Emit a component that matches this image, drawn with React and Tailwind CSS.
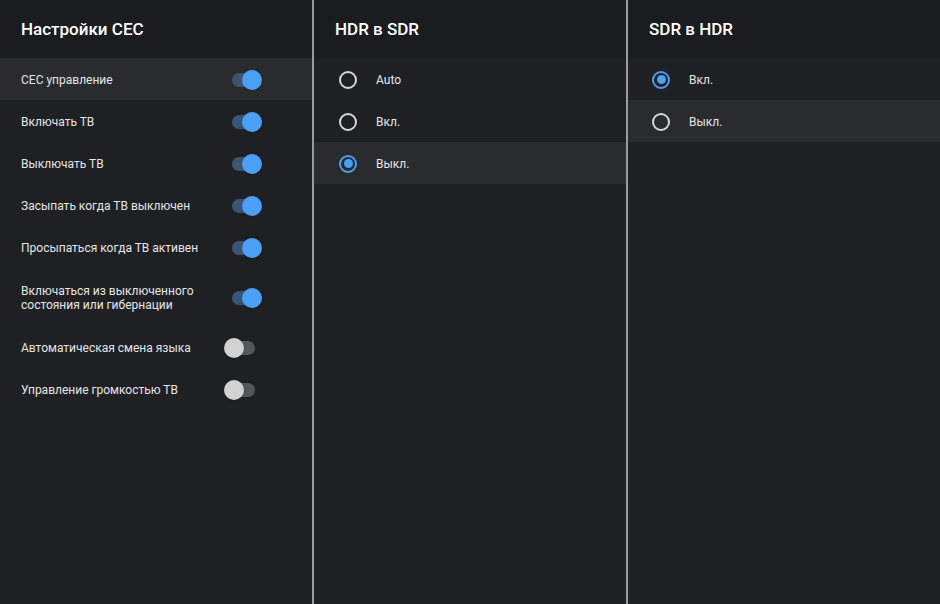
import React from "react";

const cecRows = [
  { label: "CEC управление", on: true, active: true },
  { label: "Включать ТВ", on: true },
  { label: "Выключать ТВ", on: true },
  { label: "Засыпать когда ТВ выключен", on: true },
  { label: "Просыпаться когда ТВ активен", on: true },
  { label: "Включаться из выключенного\nсостояния или гибернации", on: true, tall: true },
  { label: "Автоматическая смена языка", on: false },
  { label: "Управление громкостью ТВ", on: false },
];

function Toggle({ on }) {
  return (
    <div className="relative w-[38px] h-[20px] flex items-center">
      <div
        className={`ml-[8px] h-[14px] rounded-full ${on ? "w-[26px] bg-[#3b5674]" : "w-[23px] bg-[#555659]"}`}
      />
      <div
        className={`absolute top-0 w-[20px] h-[20px] rounded-full shadow ${on ? "left-[18px] bg-[#4b9ff4]" : "left-0 bg-[#d2d2d2]"}`}
      />
    </div>
  );
}

function Radio({ checked }) {
  return (
    <div
      className={`w-[18px] h-[18px] rounded-full border-2 flex items-center justify-center ${checked ? "border-[#4b9ff4]" : "border-[#d6d6d6]"}`}
    >
      {checked && <div className="w-[9px] h-[9px] rounded-full bg-[#4b9ff4]" />}
    </div>
  );
}

function Header({ title }) {
  return (
    <div className="h-[58px] bg-[#1b1c1f] flex items-center px-[21px] pt-[2px]">
      <h1 className="text-[17px] font-medium text-white">{title}</h1>
    </div>
  );
}

function RadioPanel({ title, options, selected, active, pad }) {
  return (
    <div className="w-[312px] h-full bg-[#1f2023]">
      <Header title={title} />
      {options.map((o, i) => (
        <div
          key={o}
          className={`h-[42px] flex items-center pt-[1px] ${pad} ${i === active ? "bg-[#2a2b2e]" : ""}`}
        >
          <Radio checked={i === selected} />
          <span className="text-[12px] text-[#e6e6e6]">{o}</span>
        </div>
      ))}
    </div>
  );
}

export default function App() {
  return (
    <div
      className="w-[940px] h-[604px] flex bg-[#1f2023] overflow-hidden"
      style={{ fontFamily: "Roboto, 'Noto Sans', sans-serif" }}
    >
      <div className="w-[312px] h-full bg-[#1f2023]">
        <Header title="Настройки CEC" />
        {cecRows.map((r) => (
          <div
            key={r.label}
            className={`flex items-center justify-between pl-[21px] pr-[50px] pt-[1px] ${r.tall ? "h-[58px]" : "h-[42px]"} ${r.active ? "bg-[#2a2b2e]" : ""}`}
          >
            <span className="text-[12px] leading-[14px] text-[#e6e6e6] whitespace-pre-line">{r.label}</span>
            <Toggle on={r.on} />
          </div>
        ))}
      </div>
      <div className="w-[2px] h-full bg-[#9a9b9d]" />
      <RadioPanel
        title="HDR в SDR"
        options={["Auto", "Вкл.", "Выкл."]}
        selected={2}
        active={2}
        pad="pl-[25px] gap-[19px]"
      />
      <div className="w-[2px] h-full bg-[#9a9b9d]" />
      <RadioPanel
        title="SDR в HDR"
        options={["Вкл.", "Выкл."]}
        selected={0}
        active={1}
        pad="pl-[24px] gap-[19px]"
      />
    </div>
  );
}
